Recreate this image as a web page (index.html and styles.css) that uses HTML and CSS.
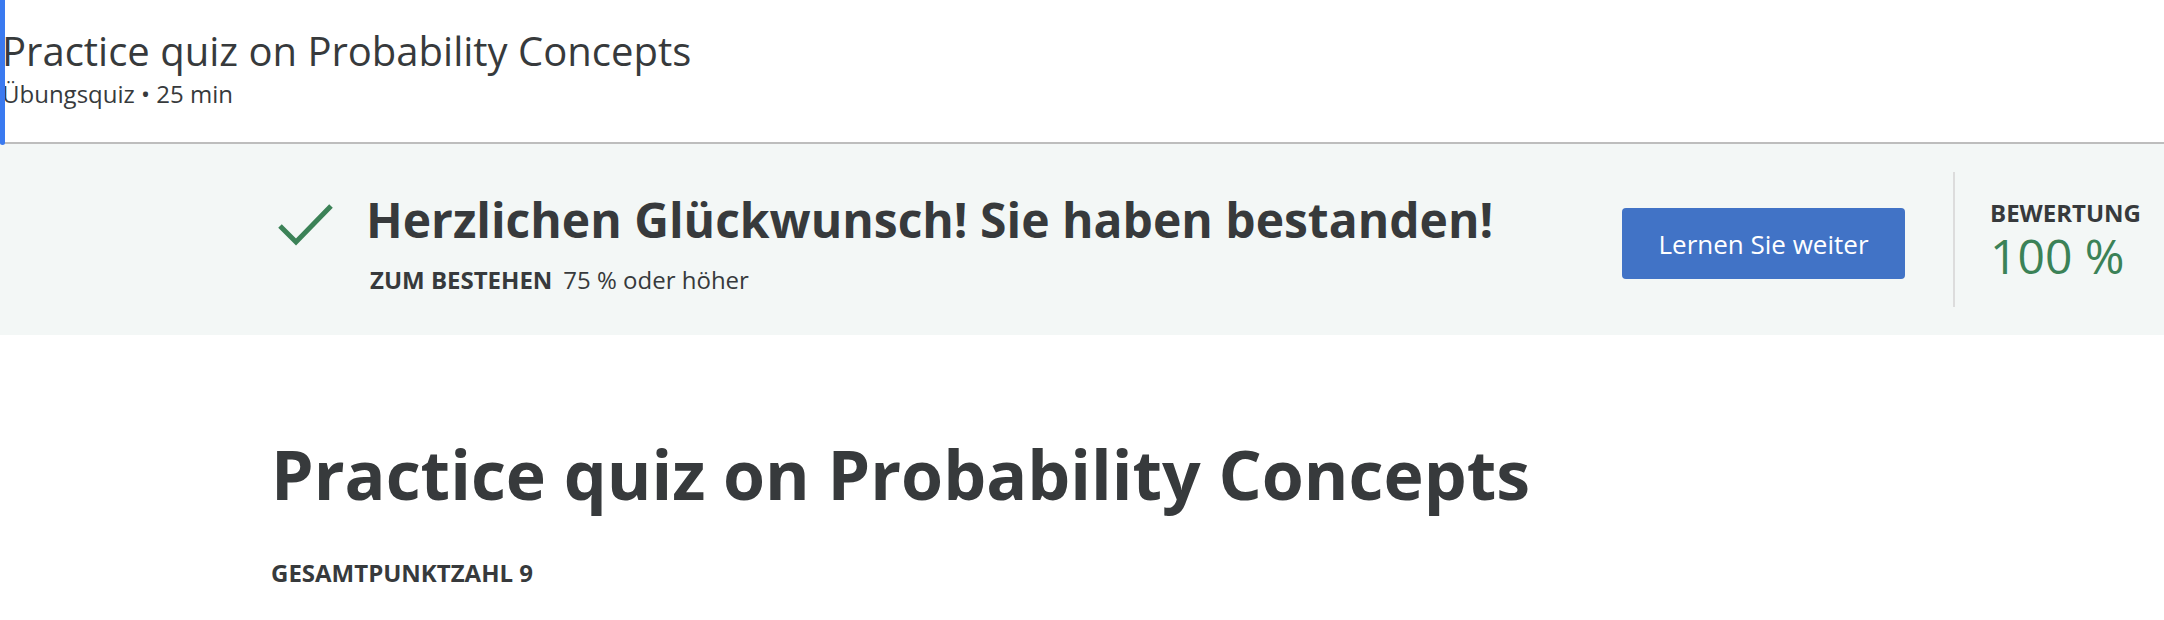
FILE: index.html
```html
<!DOCTYPE html>
<html lang="de">
<head>
<meta charset="utf-8">
<title>Practice quiz on Probability Concepts</title>
<link rel="stylesheet" href="styles.css">
</head>
<body>
<header class="top">
  <h1 class="top-title">Practice quiz on Probability Concepts</h1>
  <div class="top-sub">Übungsquiz • 25 min</div>
</header>
<section class="banner">
  <div class="result">
    <svg class="check" width="56" height="44" viewBox="0 0 56 44" aria-hidden="true">
      <polyline points="2,23 18,39 53,3" fill="none" stroke="#3b8257" stroke-width="5"/>
    </svg>
    <div class="result-text">
      <h2 class="result-title">Herzlichen Glückwunsch! Sie haben bestanden!</h2>
      <div class="pass"><span class="pass-label">ZUM BESTEHEN</span><span class="pass-value">75 % oder höher</span></div>
    </div>
  </div>
  <button class="continue">Lernen Sie weiter</button>
  <div class="divider"></div>
  <div class="score">
    <div class="score-label">BEWERTUNG</div>
    <div class="score-value">100 %</div>
  </div>
</section>
<main class="content">
  <h1 class="quiz-title">Practice quiz on Probability Concepts</h1>
  <div class="total">GESAMTPUNKTZAHL 9</div>
</main>
</body>
</html>
```
FILE: styles.css
```css
* { box-sizing: border-box; }
body {
  margin: 0;
  font-family: "Open Sans", "Noto Sans", sans-serif;
  color: #373a3c;
  background: #fff;
}
.top {
  position: relative;
  height: 144px;
  padding: 25px 0 0 2px;
  border-bottom: 2px solid #bdbdbd;
}
.top::before {
  content: "";
  position: absolute;
  left: 0;
  top: 0;
  width: 5px;
  height: 145px;
  background: #3a7af0;
  border-radius: 0 0 3px 3px;
}
.top-title {
  margin: 0;
  font-size: 40px;
  font-weight: 400;
  line-height: 52px;
}
.top-sub {
  margin-top: 2px;
  font-size: 24px;
  line-height: 30px;
}
.banner {
  display: flex;
  align-items: center;
  height: 191px;
  background: #f3f7f6;
  padding: 0 23px 0 278px;
}
.result {
  flex: 1;
  display: flex;
  align-items: flex-start;
  padding-top: 6px;
}
.check {
  display: block;
  overflow: visible;
  margin-top: 13px;
}
.result-text {
  margin-left: 32px;
}
.result-title {
  margin: 0;
  font-size: 48px;
  font-weight: 700;
  line-height: 60px;
}
.pass {
  font-size: 24px;
  line-height: 32px;
  margin-top: 14px;
  padding-left: 4px;
}
.pass-label {
  font-weight: 700;
  margin-right: 11px;
}
.continue {
  width: 283px;
  height: 71px;
  margin-top: 8px;
  border: 0;
  border-radius: 4px;
  background: #4173c6;
  color: #fff;
  font-family: inherit;
  font-size: 26px;
  padding: 0;
}
.divider {
  width: 2px;
  height: 135px;
  background: #dcdcdc;
  margin-left: 48px;
  margin-right: 35px;
}
.score {
  padding-top: 2px;
}
.score-label {
  font-size: 24px;
  font-weight: 700;
  line-height: 30px;
}
.score-value {
  font-size: 48px;
  color: #3b8257;
  line-height: 56px;
}
.content {
  padding: 99px 0 0 271px;
}
.quiz-title {
  margin: 0;
  font-size: 68px;
  font-weight: 700;
  line-height: 80px;
}
.total {
  margin-top: 43px;
  font-size: 24px;
  font-weight: 700;
  line-height: 32px;
}
```
